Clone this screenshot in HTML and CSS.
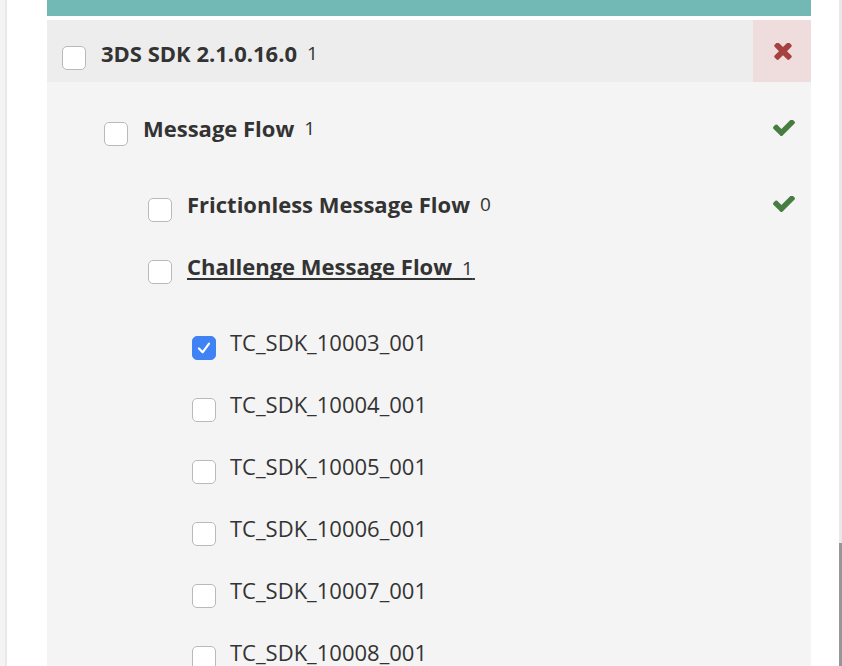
FILE: index.html
```html
<!DOCTYPE html>
<html>
<head>
<meta charset="utf-8">
<link rel="stylesheet" href="styles.css">
</head>
<body>
<div class="page">
  <div class="gutter"></div>
  <div class="main">
    <div class="panel">
      <div class="topbar"></div>
      <div class="suite">
        <div class="suite-label">
          <span class="cb"></span>
          <span class="name">3DS SDK 2.1.0.16.0</span>
          <span class="count">1</span>
        </div>
        <div class="status fail">
          <svg class="ico-x" viewBox="110 410 1190 1150"><path d="M1298 1322q0 40-28 68l-136 136q-28 28-68 28t-68-28l-294-294-294 294q-28 28-68 28t-68-28l-136-136q-28-28-28-68t28-68l294-294-294-294q-28-28-28-68t28-68l136-136q28-28 68-28t68 28l294 294 294-294q28-28 68-28t68 28l136 136q28 28 28 68t-28 68l-294 294 294 294q28 28 28 68z"/></svg>
        </div>
      </div>
      <div class="tree">
        <div class="row lvl1">
          <span class="cb"></span>
          <span class="name">Message Flow</span>
          <span class="count">1</span>
          <svg class="ico-ok" viewBox="120 395 1552 1110"><path d="M1671 566q0 40-28 68l-724 724-136 136q-28 28-68 28t-68-28l-136-136-362-362q-28-28-28-68t28-68l136-136q28-28 68-28t68 28l294 295 656-657q28-28 68-28t68 28l136 136q28 28 28 68z"/></svg>
        </div>
        <div class="row lvl2 first">
          <span class="cb"></span>
          <span class="name">Frictionless Message Flow</span>
          <span class="count">0</span>
          <svg class="ico-ok" viewBox="120 395 1552 1110"><path d="M1671 566q0 40-28 68l-724 724-136 136q-28 28-68 28t-68-28l-136-136-362-362q-28-28-28-68t28-68l136-136q28-28 68-28t68 28l294 295 656-657q28-28 68-28t68 28l136 136q28 28 28 68z"/></svg>
        </div>
        <div class="row lvl2">
          <span class="cb"></span>
          <span class="link"><span class="name">Challenge Message Flow</span><span class="count gapped">1</span></span>
        </div>
        <div class="cases">
          <div class="row lvl3"><span class="cb checked"><svg viewBox="0 0 24 24"><path d="M6.5 12.5l4 4.2 7-9.4"/></svg></span><span class="tc">TC_SDK_10003_001</span></div>
          <div class="row lvl3"><span class="cb"></span><span class="tc">TC_SDK_10004_001</span></div>
          <div class="row lvl3"><span class="cb"></span><span class="tc">TC_SDK_10005_001</span></div>
          <div class="row lvl3"><span class="cb"></span><span class="tc">TC_SDK_10006_001</span></div>
          <div class="row lvl3"><span class="cb"></span><span class="tc">TC_SDK_10007_001</span></div>
          <div class="row lvl3"><span class="cb"></span><span class="tc">TC_SDK_10008_001</span></div>
        </div>
      </div>
    </div>
  </div>
  <div class="scrollbar"><div class="thumb"></div></div>
</div>
</body>
</html>
```
FILE: styles.css
```css
html, body {
  margin: 0;
  padding: 0;
  background: #ffffff;
}
body {
  font-family: "Open Sans", "Liberation Sans", sans-serif;
  color: #333333;
}
.page {
  display: flex;
  height: 666px;
  overflow: hidden;
}
.gutter {
  width: 5px;
  background: #f4f4f4;
  border-right: 2px solid #e9e9e9;
  flex: none;
}
.main {
  flex: none;
  width: 804px;
  padding-left: 40px;
  box-sizing: border-box;
}
.panel {
  width: 764px;
  height: 666px;
  display: flex;
  flex-direction: column;
}
.topbar {
  height: 16px;
  background: #72b9b5;
  margin-bottom: 4px;
  flex: none;
}
.suite {
  height: 62px;
  background: #ededed;
  display: flex;
  flex: none;
}
.suite-label {
  flex: 1;
  display: flex;
  align-items: center;
  padding-left: 15px;
  padding-top: 4px;
}
.status {
  width: 58px;
  display: flex;
  align-items: center;
  justify-content: center;
}
.status.fail {
  background: #efdddd;
}
.ico-x {
  width: 18px;
  height: 17px;
  fill: #a5423f;
  margin-left: 1px;
}
.ico-ok {
  width: 22px;
  height: 16px;
  fill: #477d40;
  margin-left: auto;
  margin-right: 16px;
}
.tree {
  flex: 1;
  background: #f4f4f4;
  padding-top: 30px;
}
.row {
  display: flex;
  align-items: center;
  height: 32px;
}
.row + .row {
  margin-top: 30px;
}
.row.first {
  margin-top: 44px;
}
.cases {
  margin-top: 44px;
}
.lvl1 { padding-left: 57px; }
.lvl2 { padding-left: 101px; }
.lvl3 { padding-left: 145px; }
.cb {
  width: 24px;
  height: 24px;
  box-sizing: border-box;
  border: 1px solid #b9b9b9;
  border-radius: 5px;
  background: #ffffff;
  flex: none;
  margin-top: 11px;
  margin-right: 15px;
  display: flex;
  align-items: center;
  justify-content: center;
}
.suite-label .cb {
  margin-top: 9px;
}
.cb.checked {
  background: #3f82f4;
  border-color: #3f82f4;
}
.cb.checked svg {
  width: 22px;
  height: 22px;
  fill: none;
  stroke: #ffffff;
  stroke-width: 2.4;
  stroke-linecap: round;
  stroke-linejoin: round;
}
.name {
  font-weight: 700;
  font-size: 22px;
  color: #333333;
}
.count {
  font-size: 19px;
  margin-left: 10px;
  color: #333333;
}
.link {
  text-decoration: underline;
  text-underline-offset: 3px;
  text-decoration-thickness: 2px;
  text-decoration-skip-ink: none;
  color: #333333;
}
.link .count.gapped {
  margin-left: 0;
}
.link .count.gapped::before {
  content: "\00a0\00a0";
}
.link .count.gapped::after {
  content: "\00a0";
  font-size: 8px;
}
.tc {
  font-size: 22px;
  margin-left: -1px;
  color: #333333;
}
.scrollbar {
  margin-left: auto;
  width: 3px;
  background: #e8e8e8;
  display: flex;
  flex-direction: column;
  justify-content: flex-end;
}
.thumb {
  height: 123px;
  background: #979797;
}
```
